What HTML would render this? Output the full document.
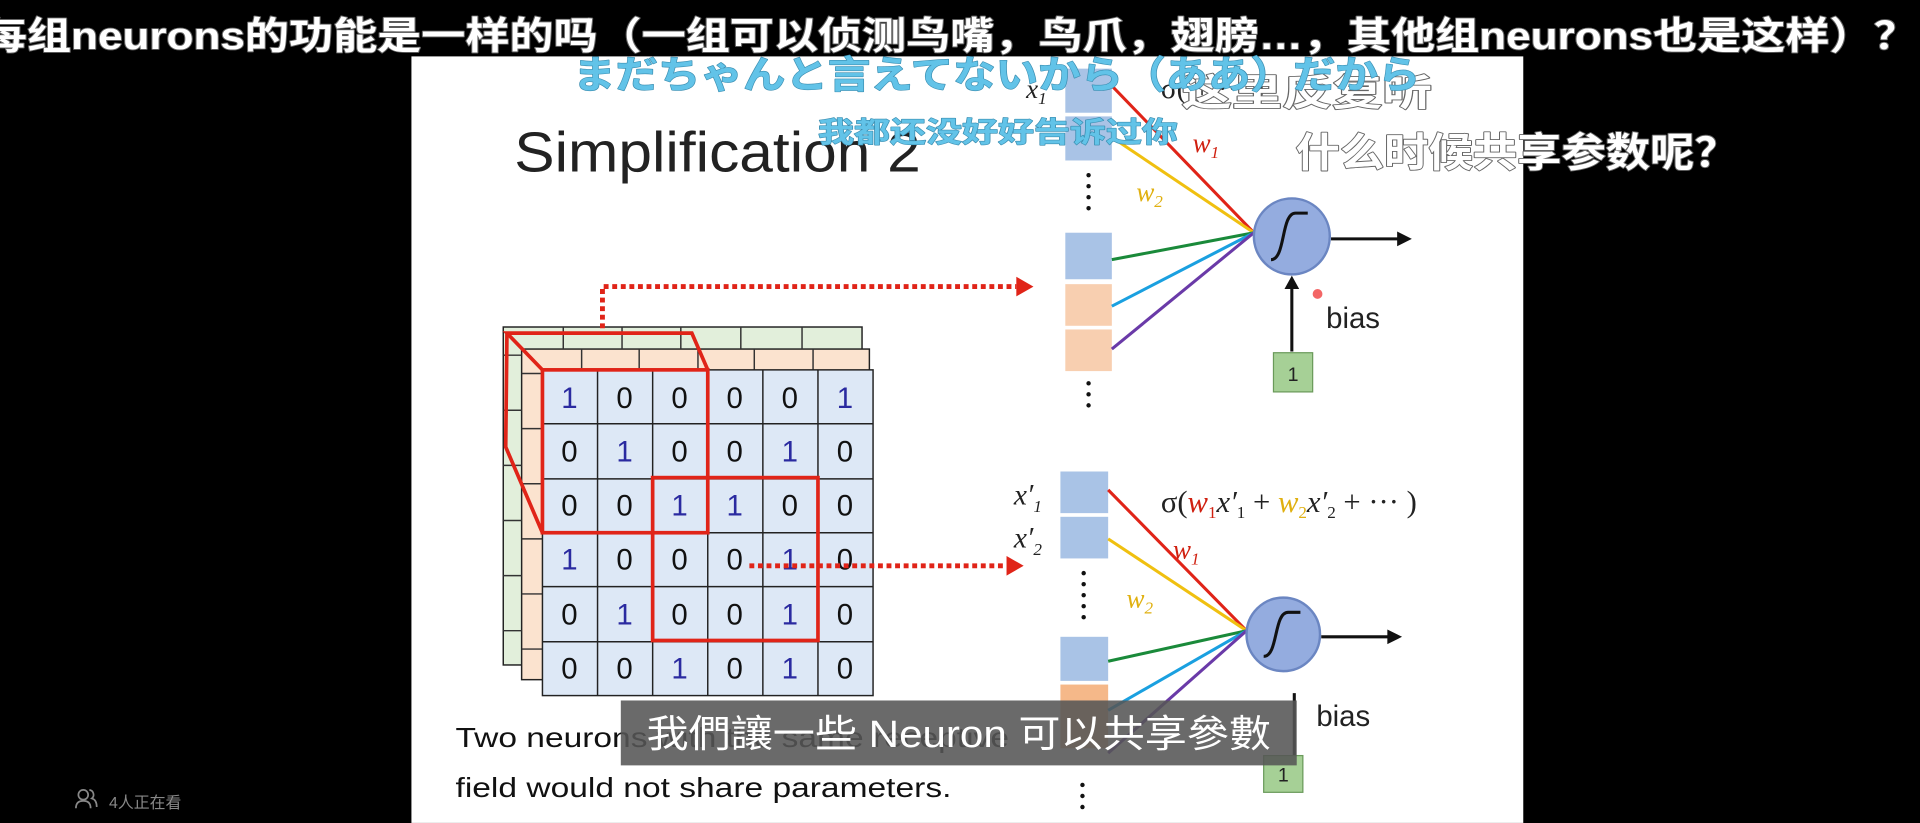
<!DOCTYPE html>
<html><head><meta charset="utf-8"><style>
html,body{margin:0;padding:0;background:#000;width:1920px;height:823px;overflow:hidden}
svg{display:block}
.cj{font-family:"Liberation Sans","Noto Sans CJK SC",sans-serif}
</style></head><body>
<svg width="1920" height="823" viewBox="0 0 1568 672" xmlns="http://www.w3.org/2000/svg">
<rect width="1568" height="672" fill="#000"/>
<rect x="336" y="46" width="908" height="626" fill="#fff"/>
<!-- title -->
<text x="420" y="140" font-family="Liberation Sans,sans-serif" font-size="46" fill="#222" textLength="332" lengthAdjust="spacingAndGlyphs">Simplification 2</text>

<!-- grid layers -->
<g stroke="#222" stroke-width="1.2">
<rect x="411" y="267" width="293" height="276" fill="#e2efdb"/>
<rect x="426" y="285" width="284" height="270" fill="#fbe3cf"/>
<g stroke="#333">
<line x1="411" y1="290" x2="426" y2="290"/><line x1="411" y1="335" x2="426" y2="335"/><line x1="411" y1="380" x2="426" y2="380"/><line x1="411" y1="425" x2="426" y2="425"/><line x1="411" y1="470" x2="426" y2="470"/><line x1="411" y1="515" x2="426" y2="515"/>
<line x1="426" y1="305" x2="443" y2="305"/><line x1="426" y1="350" x2="443" y2="350"/><line x1="426" y1="395" x2="443" y2="395"/><line x1="426" y1="440" x2="443" y2="440"/><line x1="426" y1="485" x2="443" y2="485"/><line x1="426" y1="530" x2="443" y2="530"/>
<line x1="460" y1="267" x2="460" y2="285"/><line x1="508" y1="267" x2="508" y2="285"/><line x1="556" y1="267" x2="556" y2="285"/><line x1="605" y1="267" x2="605" y2="285"/><line x1="655" y1="267" x2="655" y2="285"/>
<line x1="475" y1="285" x2="475" y2="302"/><line x1="522" y1="285" x2="522" y2="302"/><line x1="570" y1="285" x2="570" y2="302"/><line x1="616" y1="285" x2="616" y2="302"/><line x1="664" y1="285" x2="664" y2="302"/>
</g>
<rect x="443" y="302" width="270" height="266" fill="#dde8f6"/>
<g stroke="#222">
<line x1="488" y1="302" x2="488" y2="568"/><line x1="533" y1="302" x2="533" y2="568"/><line x1="578" y1="302" x2="578" y2="568"/><line x1="623" y1="302" x2="623" y2="568"/><line x1="668" y1="302" x2="668" y2="568"/>
<line x1="443" y1="346" x2="713" y2="346"/><line x1="443" y1="391" x2="713" y2="391"/><line x1="443" y1="435" x2="713" y2="435"/><line x1="443" y1="479" x2="713" y2="479"/><line x1="443" y1="524" x2="713" y2="524"/>
</g></g>
<g font-family="Liberation Sans,sans-serif" font-size="24" text-anchor="middle">
<g fill="#111">
<text x="510" y="333">0</text><text x="555" y="333">0</text><text x="600" y="333">0</text><text x="645" y="333">0</text>
<text x="465" y="377">0</text><text x="555" y="377">0</text><text x="600" y="377">0</text><text x="690" y="377">0</text>
<text x="465" y="421">0</text><text x="510" y="421">0</text><text x="645" y="421">0</text><text x="690" y="421">0</text>
<text x="510" y="465">0</text><text x="555" y="465">0</text><text x="600" y="465">0</text><text x="690" y="465">0</text>
<text x="465" y="510">0</text><text x="555" y="510">0</text><text x="600" y="510">0</text><text x="690" y="510">0</text>
<text x="465" y="554">0</text><text x="510" y="554">0</text><text x="600" y="554">0</text><text x="690" y="554">0</text>
</g><g fill="#2a2aa0">
<text x="465" y="333">1</text><text x="690" y="333">1</text>
<text x="510" y="377">1</text><text x="645" y="377">1</text>
<text x="555" y="421">1</text><text x="600" y="421">1</text>
<text x="465" y="465">1</text><text x="645" y="465">1</text>
<text x="510" y="510">1</text><text x="645" y="510">1</text>
<text x="555" y="554">1</text><text x="645" y="554">1</text>
</g></g>
<!-- red boxes -->
<g fill="none" stroke="#e02418" stroke-width="3">
<rect x="443" y="302" width="135" height="133"/>
<polyline points="443,302 414,272 565,272 578,302"/>
<polyline points="414,272 413,365 443,435"/>
<rect x="533" y="390" width="135" height="133"/>
</g>
<g stroke="#e02418" stroke-width="4" stroke-dasharray="4,3" fill="none">
<polyline points="492,268 492,234 830,234"/>
<line x1="612" y1="462" x2="822" y2="462"/>
</g>
<polygon points="830,226 844,234 830,242" fill="#e02418"/>
<polygon points="822,454 836,462 822,470" fill="#e02418"/>

<!-- upper network -->
<g>
<rect x="870" y="56" width="38" height="36" fill="#a9c3e6"/>
<rect x="870" y="95" width="38" height="36" fill="#a9c3e6"/>
<rect x="870" y="190" width="38" height="38" fill="#a9c3e6"/>
<rect x="870" y="232" width="38" height="34" fill="#f8cfb0"/>
<rect x="870" y="269" width="38" height="34" fill="#f8cfb0"/>
<g fill="#111"><circle cx="889" cy="143" r="1.8"/><circle cx="889" cy="152" r="1.8"/><circle cx="889" cy="161" r="1.8"/><circle cx="889" cy="170" r="1.8"/><circle cx="889" cy="313" r="1.8"/><circle cx="889" cy="322" r="1.8"/><circle cx="889" cy="331" r="1.8"/></g>
<g stroke-width="2.5">
<line x1="908" y1="70" x2="1024" y2="190" stroke="#e02418"/>
<line x1="908" y1="112" x2="1024" y2="190" stroke="#f0c010"/>
<line x1="908" y1="212" x2="1024" y2="190" stroke="#1a8a3a"/>
<line x1="908" y1="250" x2="1024" y2="190" stroke="#1aa0e0"/>
<line x1="908" y1="285" x2="1024" y2="190" stroke="#6a3aa8"/>
</g>
<circle cx="1055" cy="193" r="31" fill="#94acdf" stroke="#6b86c2" stroke-width="2"/>
<path d="M1038,212 C1050,212 1046,174 1058,174 L1068,174" fill="none" stroke="#111" stroke-width="2.5"/>
<line x1="1087" y1="195" x2="1143" y2="195" stroke="#111" stroke-width="2.5"/><polygon points="1141,189 1153,195 1141,201" fill="#111"/>
<line x1="1055" y1="287" x2="1055" y2="234" stroke="#111" stroke-width="2.5"/><polygon points="1049,236 1055,225 1061,236" fill="#111"/>
<rect x="1040" y="288" width="32" height="32" fill="#a6d096" stroke="#6a9a5a"/>
<text x="1056" y="311" font-family="Liberation Sans,sans-serif" font-size="16" text-anchor="middle" fill="#222">1</text>
<text x="1083" y="268" font-family="Liberation Sans,sans-serif" font-size="24" fill="#222">bias</text>
<circle cx="1076" cy="240" r="4" fill="#f04040" opacity="0.8"/>
<text x="974" y="124" font-family="Liberation Serif,serif" font-style="italic" font-size="22" fill="#d02010">w<tspan font-size="14" dy="5">1</tspan></text>
<text x="928" y="164" font-family="Liberation Serif,serif" font-style="italic" font-size="22" fill="#e0b010">w<tspan font-size="14" dy="5">2</tspan></text>
<text x="838" y="80" font-family="Liberation Serif,serif" font-style="italic" font-size="22" fill="#222">x<tspan font-size="14" dy="5">1</tspan></text>
<text x="948" y="80" font-family="Liberation Serif,serif" font-size="24" fill="#222">σ(             + ··· )</text>
</g>

<!-- lower network -->
<g>
<rect x="866" y="385" width="39" height="34" fill="#a9c3e6"/>
<rect x="866" y="422" width="39" height="34" fill="#a9c3e6"/>
<rect x="866" y="520" width="39" height="36" fill="#a9c3e6"/>
<rect x="866" y="559" width="39" height="52" fill="#f5b889"/>
<g fill="#111"><circle cx="885" cy="468" r="1.8"/><circle cx="885" cy="477" r="1.8"/><circle cx="885" cy="486" r="1.8"/><circle cx="885" cy="495" r="1.8"/><circle cx="885" cy="504" r="1.8"/><circle cx="884" cy="641" r="1.8"/><circle cx="884" cy="650" r="1.8"/><circle cx="884" cy="659" r="1.8"/></g>
<g stroke-width="2.5">
<line x1="905" y1="400" x2="1018" y2="515" stroke="#e02418"/>
<line x1="905" y1="440" x2="1018" y2="515" stroke="#f0c010"/>
<line x1="905" y1="540" x2="1018" y2="515" stroke="#1a8a3a"/>
<line x1="905" y1="580" x2="1018" y2="515" stroke="#1aa0e0"/>
<line x1="905" y1="615" x2="1018" y2="515" stroke="#6a3aa8"/>
</g>
<circle cx="1048" cy="518" r="30" fill="#94acdf" stroke="#6b86c2" stroke-width="2"/>
<path d="M1032,536 C1044,536 1040,500 1052,500 L1062,500" fill="none" stroke="#111" stroke-width="2.5"/>
<line x1="1079" y1="520" x2="1135" y2="520" stroke="#111" stroke-width="2.5"/><polygon points="1133,514 1145,520 1133,526" fill="#111"/>
<line x1="1057" y1="618" x2="1057" y2="566" stroke="#111" stroke-width="2.5"/>
<rect x="1032" y="617" width="32" height="30" fill="#a6d096" stroke="#6a9a5a"/>
<text x="1048" y="638" font-family="Liberation Sans,sans-serif" font-size="16" text-anchor="middle" fill="#222">1</text>
<text x="1075" y="593" font-family="Liberation Sans,sans-serif" font-size="24" fill="#222">bias</text>
<text x="958" y="456" font-family="Liberation Serif,serif" font-style="italic" font-size="22" fill="#d02010">w<tspan font-size="14" dy="5">1</tspan></text>
<text x="920" y="496" font-family="Liberation Serif,serif" font-style="italic" font-size="22" fill="#e0b010">w<tspan font-size="14" dy="5">2</tspan></text>
<text x="828" y="412" font-family="Liberation Serif,serif" font-style="italic" font-size="24" fill="#222">x′<tspan font-size="14" dy="6">1</tspan></text>
<text x="828" y="447" font-family="Liberation Serif,serif" font-style="italic" font-size="24" fill="#222">x′<tspan font-size="14" dy="6">2</tspan></text>
<text x="948" y="418" font-family="Liberation Serif,serif" font-size="25" fill="#222">σ(<tspan font-style="italic" fill="#d02010">w</tspan><tspan font-size="14" dy="5" fill="#d02010">1</tspan><tspan dy="-5" font-style="italic">x′</tspan><tspan font-size="14" dy="5">1</tspan><tspan dy="-5"> + </tspan><tspan font-style="italic" fill="#e0b010">w</tspan><tspan font-size="14" dy="5" fill="#e0b010">2</tspan><tspan dy="-5" font-style="italic">x′</tspan><tspan font-size="14" dy="5">2</tspan><tspan dy="-5"> + ··· )</tspan></text>
</g>

<text x="372" y="610" font-family="Liberation Sans,sans-serif" font-size="23" fill="#111" textLength="452" lengthAdjust="spacingAndGlyphs">Two neurons with the same receptive</text>
<text x="372" y="651" font-family="Liberation Sans,sans-serif" font-size="23" fill="#111" textLength="405" lengthAdjust="spacingAndGlyphs">field would not share parameters.</text>

<!-- caption -->
<rect x="507" y="572" width="552" height="53" fill="#555" opacity="0.88"/>
<text x="783" y="610" class="cj" font-size="31" fill="#fff" text-anchor="middle" textLength="510" lengthAdjust="spacingAndGlyphs">我們讓一些 Neuron 可以共享參數</text>

<!-- danmaku -->
<g class="cj" font-weight="bold" stroke-linejoin="round">
<text x="-14" y="40" font-size="31" fill="#fff" stroke="#666" stroke-width="1.5" paint-order="stroke" textLength="1580" lengthAdjust="spacingAndGlyphs">每组neurons的功能是一样的吗（一组可以侦测鸟嘴，鸟爪，翅膀…，其他组neurons也是这样）？</text>
<text x="965" y="86" font-size="30" fill="#fff" stroke="#666" stroke-width="1.5" paint-order="stroke" textLength="205" lengthAdjust="spacingAndGlyphs">这里反复听</text>
<text x="468" y="72" font-size="31" fill="#62c3e8" stroke="#3a8db0" stroke-width="1" paint-order="stroke" textLength="692" lengthAdjust="spacingAndGlyphs">まだちゃんと言えてないから（ああ）だから</text>
<text x="668" y="116" font-size="23" fill="#62c3e8" stroke="#3a8db0" stroke-width="1" paint-order="stroke" textLength="294" lengthAdjust="spacingAndGlyphs">我都还没好好告诉过你</text>
<text x="1058" y="136" font-size="33" fill="#fff" stroke="#666" stroke-width="1.5" paint-order="stroke" textLength="362" lengthAdjust="spacingAndGlyphs">什么时候共享参数呢？</text>
</g>

<!-- viewers -->
<g stroke="#888" stroke-width="1.4" fill="none">
<circle cx="68" cy="649" r="4"/><path d="M62,660 q0,-6 6,-6 q6,0 6,6"/><path d="M73,645 a4,4 0 0 1 2,7 q4,1 4,7"/>
</g>
<text x="89" y="660" class="cj" font-size="13" fill="#888">4人正在看</text>
</svg>
</body></html>
